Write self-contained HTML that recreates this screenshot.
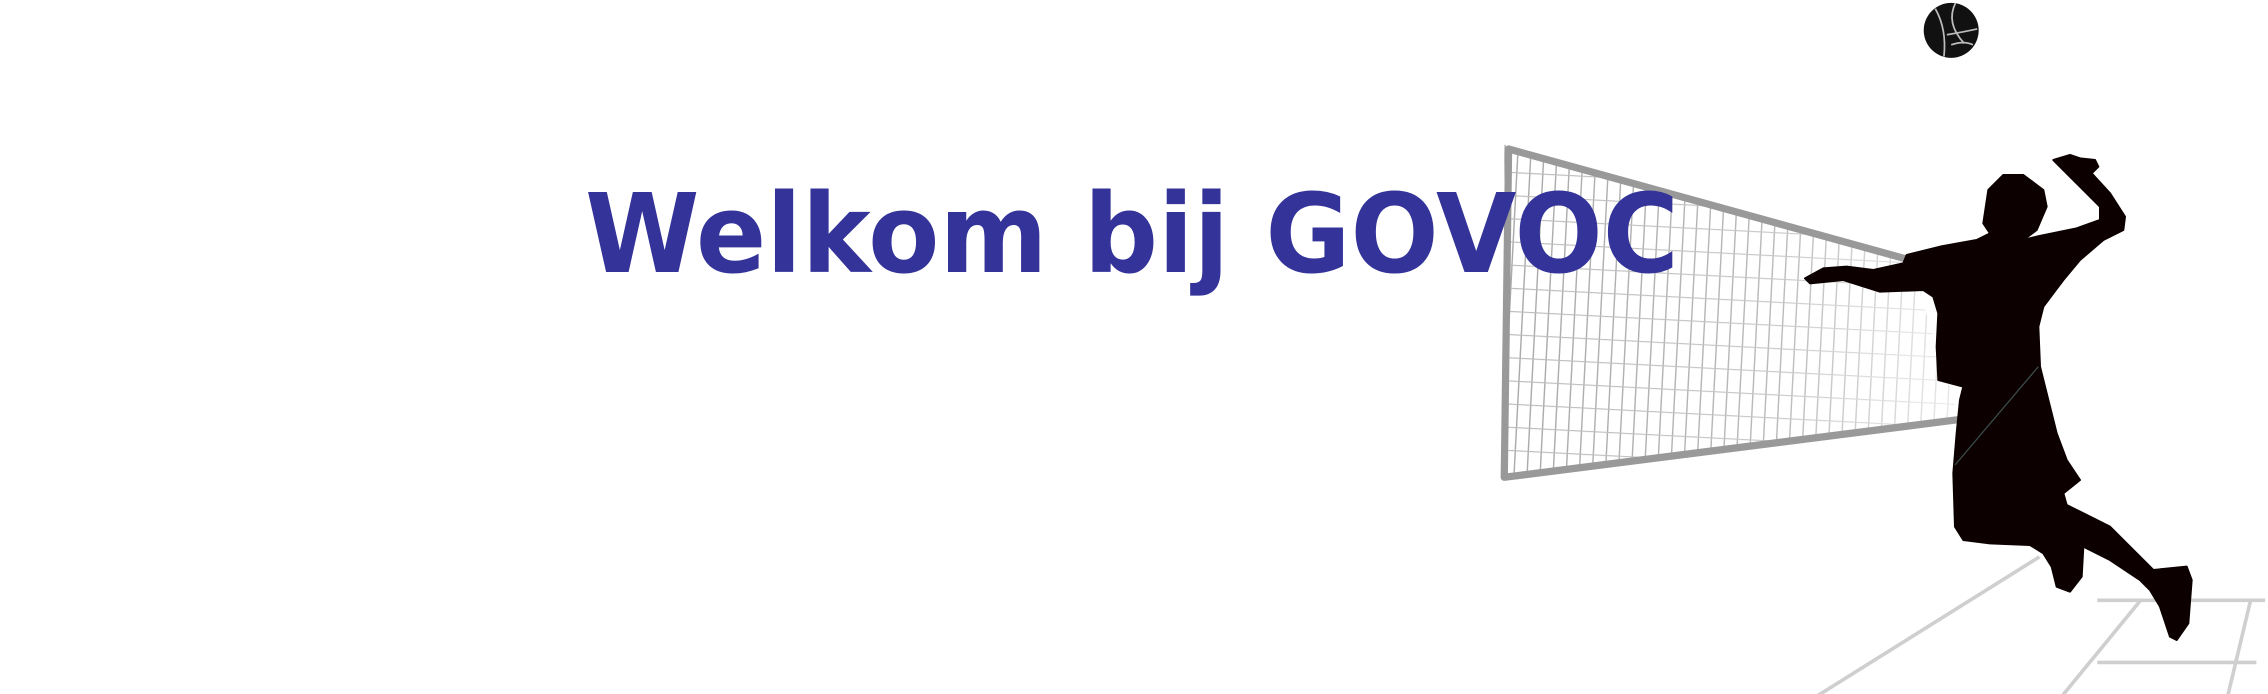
<!DOCTYPE html>
<html><head><meta charset="utf-8"><style>
html,body{margin:0;padding:0;background:#fff;width:2268px;height:694px;overflow:hidden}
svg{display:block}
</style></head><body>
<svg width="2268" height="694" viewBox="0 0 2268 694" xmlns="http://www.w3.org/2000/svg">
<defs>
<pattern id="grid" width="9" height="16" patternUnits="userSpaceOnUse" patternTransform="rotate(3)">
<line x1="0" y1="0" x2="0" y2="16" stroke="#aaa" stroke-width="2"/>
<line x1="0" y1="0" x2="9" y2="0" stroke="#bbb" stroke-width="1.6"/>
</pattern>
<linearGradient id="fade" x1="0" x2="1" y1="0" y2="0">
<stop offset="0" stop-color="#fff" stop-opacity="0"/>
<stop offset="0.6" stop-color="#fff" stop-opacity="0.2"/>
<stop offset="1" stop-color="#fff" stop-opacity="0.75"/>
</linearGradient>
</defs>
<g transform="scale(1.4464)">
  <g stroke="#cfcfcf" stroke-width="2.5" fill="none">
    <line x1="1255" y1="482" x2="1410" y2="385"/>
    <line x1="1425" y1="482" x2="1480" y2="415"/>
    <line x1="1450" y1="415" x2="1566" y2="415"/>
    <line x1="1450" y1="458" x2="1560" y2="458"/>
    <line x1="1540" y1="482" x2="1556" y2="415"/>
  </g>
  <polygon points="1040,100 1320,180 1355,290 1040,330" fill="url(#grid)"/>
  <polygon points="1040,100 1320,180 1355,290 1040,330" fill="url(#fade)"/>
  <polyline points="1325,181 1043,103 1040,330 1355,290" fill="none" stroke="#999" stroke-width="5" stroke-linejoin="round"/>
  <circle cx="1349" cy="21" r="19" fill="#111"/>
  <g stroke="#bbb" stroke-width="1.2" fill="none">
    <path d="M1338,6 Q1346,20 1344,39"/>
    <path d="M1352,2 Q1345,16 1358,30"/>
    <path d="M1346,24 Q1358,22 1367,20"/>
    <path d="M1349,31 Q1358,28 1364,31"/>
  </g>
</g>
<g transform="translate(1790,140) scale(0.33333)">
  <polygon fill="#0c0000" stroke="#0c0000" stroke-width="6" stroke-linejoin="round" points="790,60 840,45 870,55 915,60 925,80 905,100 960,160 1005,230 1000,270 940,300 870,360 820,420 790,460 760,500 745,560 750,680 770,760 800,880 830,960 870,1020 820,1060 830,1095 880,1120 960,1160 1040,1240 1090,1290 1190,1280 1205,1320 1195,1450 1160,1500 1140,1490 1110,1400 1080,1350 1050,1320 960,1260 880,1220 875,1310 840,1355 800,1340 785,1280 760,1240 720,1215 600,1210 520,1200 495,1160 490,1000 500,880 510,780 520,740 445,720 440,620 445,520 430,470 400,450 270,455 160,420 60,430 45,415 100,385 170,380 250,390 340,370 350,345 450,320 560,300 600,280 580,250 595,150 640,105 700,105 760,150 770,200 740,270 700,300 740,290 860,265 930,240 930,200 870,140 820,90"/>
  <line x1="745" y1="680" x2="495" y2="975" stroke="#3a4a4a" stroke-width="4"/>
</g>
<text x="585" y="272" textLength="1094" lengthAdjust="spacingAndGlyphs" font-family="'DejaVu Sans','Liberation Sans',sans-serif" font-weight="bold" font-size="110" fill="#333399">Welkom bij GOVOC</text>
</svg>
</body></html>
